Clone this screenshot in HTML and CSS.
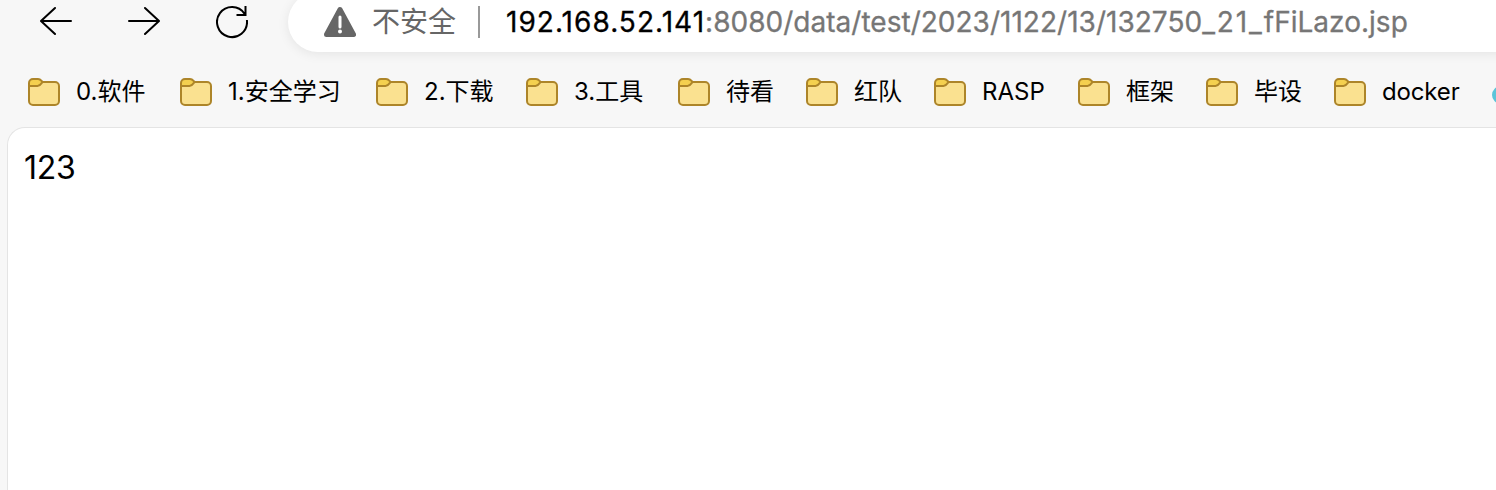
FILE: index.html
```html
<!DOCTYPE html>
<html lang="zh-CN">
<head>
<meta charset="utf-8">
<title>132750_21_fFiLazo.jsp</title>
<link rel="stylesheet" href="styles.css">
</head>
<body>
<svg class="defs" width="0" height="0" aria-hidden="true">
  <symbol id="folder" viewBox="0 0 32 28">
    <path d="M1 8V5a4 4 0 0 1 4-4h5c3 0 4 3 6 3h11a4 4 0 0 1 4 4v15a4 4 0 0 1-4 4H5a4 4 0 0 1-4-4z" fill="#fae190"/>
    <path d="M1 8V5a4 4 0 0 1 4-4h5c2 0 3 1.200 4.500 3-1.500 2.500-2.500 4-5 4z" fill="#f4d04f"/>
    <path d="M1 8V5a4 4 0 0 1 4-4h5c2.500 0 3 1.500 4.500 3H27a4 4 0 0 1 4 4v15a4 4 0 0 1-4 4H5a4 4 0 0 1-4-4zH9.500c2.500 0 3.500-2 5-4" fill="none" stroke="#ad8529" stroke-width="2" stroke-linejoin="round"/>
  </symbol>
</svg>
<header class="toolbar">
  <nav class="nav">
    <svg width="32" height="44" viewBox="0 0 32 44"><path d="M31 21H1.500M15 8L1 21l14 13"/></svg>
    <svg width="32" height="44" viewBox="0 0 32 44"><path d="M1 21h29.500M17 8L31 21 17 34"/></svg>
    <svg width="32" height="44" viewBox="0 0 32 44"><path class="reload" d="M31 21A15 15 0 1 1 28.500 13.700M29.500 7V15H21.500"/></svg>
  </nav>
  <div class="address">
    <svg class="warn" width="32" height="32" viewBox="0 0 32 32"><path d="M16 3.500L29.500 28.500H2.500z" fill="#666" stroke="#666" stroke-width="5" stroke-linejoin="round"/><path d="M16 11v10" stroke="#fff" stroke-width="3" stroke-linecap="round"/><circle cx="16" cy="25.500" r="2" fill="#fff"/></svg>
    <span class="insecure">不安全</span>
    <span class="divider"></span>
    <span class="url"><span class="host">192.168.52.141</span><span class="path">:8080/data/test/2023/1122/13/132750<span class="tail">_21_</span>fFiLazo.jsp</span></span>
  </div>
</header>
<nav class="bookmarks">
  <a><svg><use href="#folder"/></svg><span>0.软件</span></a>
  <a><svg><use href="#folder"/></svg><span>1.安全学习</span></a>
  <a><svg><use href="#folder"/></svg><span>2.下载</span></a>
  <a><svg><use href="#folder"/></svg><span>3.工具</span></a>
  <a><svg><use href="#folder"/></svg><span>待看</span></a>
  <a><svg><use href="#folder"/></svg><span>红队</span></a>
  <a><svg><use href="#folder"/></svg><span>RASP</span></a>
  <a><svg><use href="#folder"/></svg><span>框架</span></a>
  <a><svg><use href="#folder"/></svg><span>毕设</span></a>
  <a><svg><use href="#folder"/></svg><span class="docker">docker</span></a>
  <a class="site"><i class="ring"></i></a>
</nav>
<main class="page">123</main>
</body>
</html>
```
FILE: styles.css
```css
* { box-sizing: border-box; }
body {
  margin: 0;
  height: 490px;
  overflow: hidden;
  background: #f7f7f7;
  color: #000;
  font-family: Inter, "Noto Sans CJK SC", sans-serif;
  display: flex;
  flex-direction: column;
}
.defs { position: absolute; }
.toolbar { display: flex; height: 60px; flex: none; }
.nav { display: flex; gap: 56px; width: 288px; padding-left: 40px; flex: none; }
.nav path { fill: none; stroke: #000; stroke-width: 2; stroke-linecap: round; stroke-linejoin: round; }
.nav .reload { stroke-linecap: square; stroke-linejoin: miter; }
.address {
  flex: none;
  width: 1240px;
  height: 60px;
  margin-top: -8px;
  padding-left: 36px;
  border-radius: 30px;
  background: #fff;
  box-shadow: 0 2px 12px rgba(0, 0, 0, .08);
  display: flex;
  align-items: center;
  white-space: nowrap;
}
.warn { margin-right: 16px; }
.insecure { width: 106px; font-size: 28px; line-height: 40px; color: #666; }
.divider { width: 2px; height: 32px; background: #999; margin-right: 26px; }
.url { font-size: 28px; line-height: 40px; font-feature-settings: "calt" 0; -webkit-text-stroke: .3px; }
.host { letter-spacing: 1.03px; }
.path { letter-spacing: .02px; color: #767676; }
.tail { letter-spacing: 1.9px; }
.bookmarks {
  flex: none;
  height: 67px;
  padding: 0 0 3px 28px;
  display: grid;
  grid-template-columns: 152px 196px 150px 152px 128px 128px 144px 128px 128px 158px 32px;
  align-items: center;
  font-size: 24px;
  white-space: nowrap;
}
.bookmarks a { display: flex; align-items: center; gap: 16px; line-height: 36px; }
.bookmarks svg { width: 32px; height: 28px; flex: none; }
.docker { letter-spacing: -.15px; }
.ring { width: 18px; height: 18px; flex: none; margin-top: 6px; border: 4px solid #5bc4d9; border-radius: 50%; }
.page {
  flex: 1;
  margin-left: 7px;
  margin-right: -30px;
  padding: 20px 16px;
  border: solid #e4e4e4;
  border-width: 1px 0 0 1px;
  border-radius: 18px 0 0 0;
  background: #fff;
  font-size: 32px;
  line-height: 39px;
  letter-spacing: -.3px;
}
```
